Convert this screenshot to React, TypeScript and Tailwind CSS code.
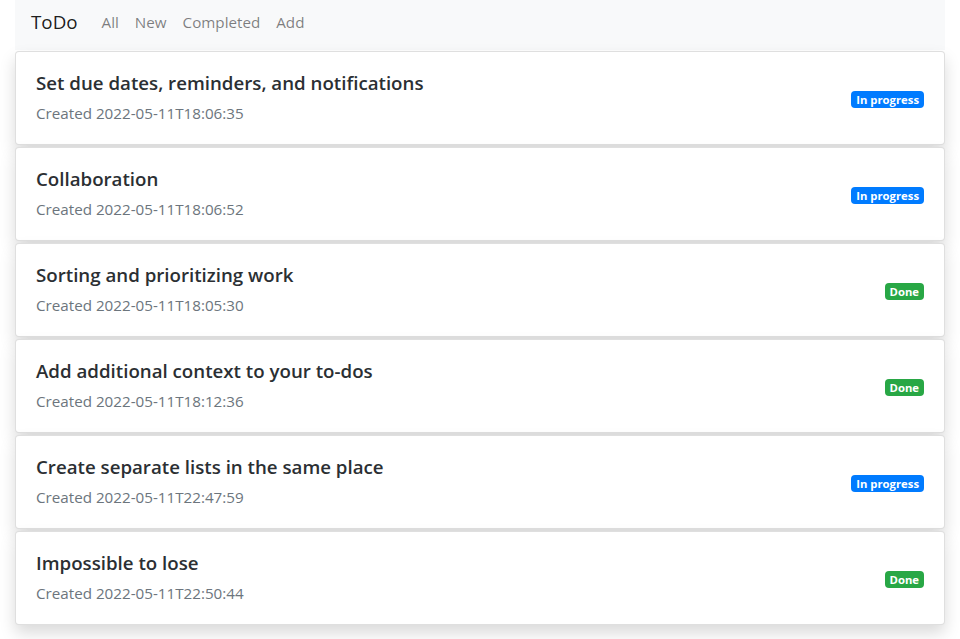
import React from 'react';

type Todo = { title: string; created: string; status: 'progress' | 'done' };

const todos: Todo[] = [
  { title: 'Set due dates, reminders, and notifications', created: '2022-05-11T18:06:35', status: 'progress' },
  { title: 'Collaboration', created: '2022-05-11T18:06:52', status: 'progress' },
  { title: 'Sorting and prioritizing work', created: '2022-05-11T18:05:30', status: 'done' },
  { title: 'Add additional context to your to-dos', created: '2022-05-11T18:12:36', status: 'done' },
  { title: 'Create separate lists in the same place', created: '2022-05-11T22:47:59', status: 'progress' },
  { title: 'Impossible to lose', created: '2022-05-11T22:50:44', status: 'done' },
];

const StatusBadge = ({ status }: { status: Todo['status'] }) =>
  status === 'done' ? (
    <span className="mt-[3px] rounded-[4px] bg-[#28a745] px-[5px] py-[2px] text-[11.3px] leading-[13px] font-bold text-white">
      Done
    </span>
  ) : (
    <span className="mt-[3px] rounded-[4px] bg-[#007bff] px-[5px] py-[2px] text-[11.3px] leading-[13px] font-bold text-white">
      In progress
    </span>
  );

const TodoCard = ({ todo }: { todo: Todo; key?: React.Key }) => (
  <div className="mb-[2px] flex h-[94px] items-center justify-between rounded-[4px] border border-black/[0.125] bg-white px-5 shadow-[0_8px_16px_rgba(0,0,0,0.15)]">
    <div>
      <h5 className="text-[18.7px] leading-[24px] font-[550] text-[#2b2f33]">{todo.title}</h5>
      <p className="mt-[6px] text-[15.2px] leading-[24px] text-[#6c757d]">Created {todo.created}</p>
    </div>
    <StatusBadge status={todo.status} />
  </div>
);

export default function App() {
  return (
    <div className="min-h-screen bg-white font-['Open_Sans',sans-serif]">
      <div className="mx-[15px]">
        {/* Navbar */}
        <nav className="flex h-[50px] items-center bg-[#f8f9fa] px-4 pb-[6px]">
          <span className="mr-6 text-[18.8px] leading-[30px] text-black/90">ToDo</span>
          <div className="flex gap-4 text-[15.2px] text-black/50">
            <span>All</span>
            <span>New</span>
            <span>Completed</span>
            <span>Add</span>
          </div>
        </nav>

        <div className="pt-px">
          {todos.map((t) => (
            <TodoCard key={t.created} todo={t} />
          ))}
        </div>
      </div>
    </div>
  );
}
